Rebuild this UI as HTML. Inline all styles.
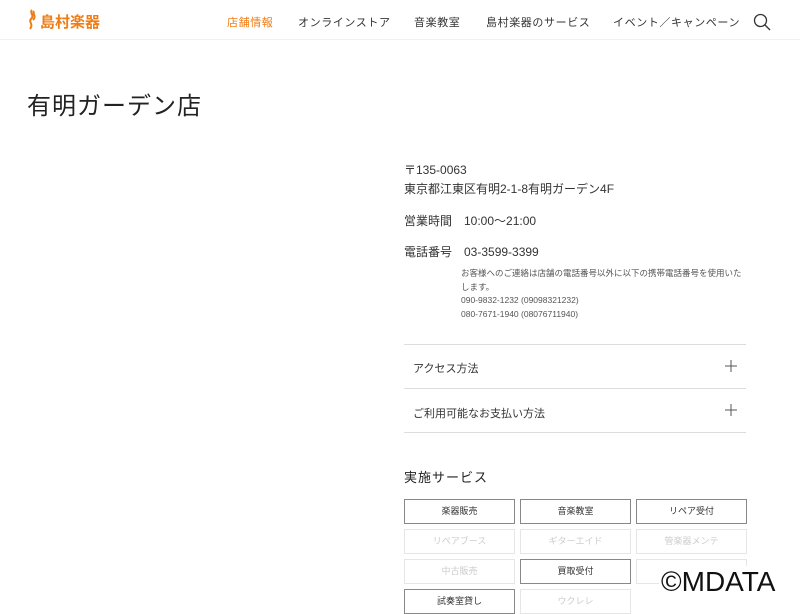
<!DOCTYPE html>
<html><head><meta charset="utf-8"><style>
*{margin:0;padding:0;box-sizing:border-box}
body{width:800px;height:600px;overflow:hidden;background:#fff;font-family:"Liberation Sans","Noto Sans CJK JP",sans-serif;color:#222;position:relative}
.a{position:absolute;white-space:nowrap}
.hdr{position:absolute;left:0;top:0;width:800px;height:40px;border-bottom:1px solid #f0f0f0}
.nav{font-size:11px;top:14px;color:#333;letter-spacing:0.6px}
.b{position:absolute;width:111px;height:25px;border:1px solid #888;font-size:9px;text-align:center;line-height:23px;color:#333}
.b.f{border-color:#e6e6e6;color:#ccc}
.ln{position:absolute;left:404px;width:342px;height:1px;background:#ddd}
</style></head><body>
<div class="hdr"></div>
<svg class="a" style="left:26px;top:9px" width="12" height="22" viewBox="0 0 12 22"><path d="M6 1 C3 4 9 6 5 10 C2 13 8 15 4 20 M8 2 C6 5 11 7 7 11" stroke="#ef7d16" stroke-width="2" fill="none"/></svg>
<div class="a" style="left:40px;top:11px;font-size:15px;font-weight:bold;color:#ef7d16">島村楽器</div>
<div class="a nav" style="left:227px;color:#ef7d16">店舗情報</div>
<div class="a nav" style="left:298px">オンラインストア</div>
<div class="a nav" style="left:414px">音楽教室</div>
<div class="a nav" style="left:486px">島村楽器のサービス</div>
<div class="a nav" style="left:613px">イベント／キャンペーン</div>
<svg class="a" style="left:753px;top:13px" width="18" height="18" viewBox="0 0 18 18"><circle cx="7.5" cy="7.5" r="6" stroke="#333" stroke-width="1.3" fill="none"/><path d="M12 12 L17 17" stroke="#333" stroke-width="1.3"/></svg>
<div class="a" style="left:27px;top:86px;font-size:24px;letter-spacing:1px;color:#222">有明ガーデン店</div>
<div class="a" style="left:404px;top:161px;font-size:12px;line-height:19px;color:#333">〒135-0063<br>東京都江東区有明2-1-8有明ガーデン4F</div>
<div class="a" style="left:404px;top:212px;font-size:12px;color:#333">営業時間　10:00〜21:00</div>
<div class="a" style="left:404px;top:243px;font-size:12px;color:#333">電話番号　03-3599-3399</div>
<div class="a" style="left:461px;top:267px;font-size:8.5px;line-height:13.5px;color:#555">お客様へのご連絡は店舗の電話番号以外に以下の携帯電話番号を使用いた<br>します。<br>090-9832-1232 (09098321232)<br>080-7671-1940 (08076711940)</div>
<div class="ln" style="top:344px"></div>
<div class="a" style="left:413px;top:360px;font-size:11px;color:#333">アクセス方法</div>
<svg class="a" style="left:725px;top:360px" width="12" height="12"><path d="M6 0V12M0 6H12" stroke="#555" stroke-width="1"/></svg>
<div class="ln" style="top:388px"></div>
<div class="a" style="left:413px;top:405px;font-size:11px;color:#333">ご利用可能なお支払い方法</div>
<svg class="a" style="left:725px;top:404px" width="12" height="12"><path d="M6 0V12M0 6H12" stroke="#555" stroke-width="1"/></svg>
<div class="ln" style="top:432px"></div>
<div class="a" style="left:404px;top:467px;font-size:13px;color:#222;letter-spacing:1px">実施サービス</div>
<div class="b" style="left:404px;top:499px">楽器販売</div>
<div class="b" style="left:520px;top:499px">音楽教室</div>
<div class="b" style="left:636px;top:499px">リペア受付</div>
<div class="b f" style="left:404px;top:529px">リペアブース</div>
<div class="b f" style="left:520px;top:529px">ギターエイド</div>
<div class="b f" style="left:636px;top:529px">管楽器メンテ</div>
<div class="b f" style="left:404px;top:559px">中古販売</div>
<div class="b" style="left:520px;top:559px">買取受付</div>
<div class="b f" style="left:636px;top:559px"></div>
<div class="b" style="left:404px;top:589px">試奏室貸し</div>
<div class="b f" style="left:520px;top:589px">ウクレレ</div>
<div class="a" style="left:659px;top:566px;font-size:28px;color:#111;background:#fff;padding:0 2px">©MDATA</div>
</body></html>
